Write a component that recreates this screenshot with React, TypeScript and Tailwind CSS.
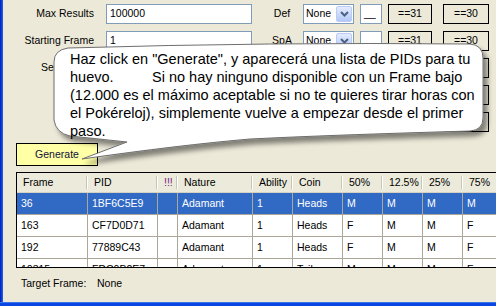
import React from "react";

const cols = [71, 70, 20, 75, 40, 50, 40, 40, 40, 60];
const headers = ["Frame", "PID", "!!!", "Nature", "Ability", "Coin", "50%", "12.5%", "25%", "75%"];
const rows = [
  ["36", "1BF6C5E9", "", "Adamant", "1", "Heads", "M", "M", "M", "M"],
  ["163", "CF7D0D71", "", "Adamant", "1", "Heads", "F", "M", "M", "F"],
  ["192", "77889C43", "", "Adamant", "1", "Heads", "F", "M", "M", "F"],
  ["10315", "FDC0B2E7", "", "Adamant", "1", "Tails", "M", "M", "M", "F"],
];

function TextBox({ w, value }: { w: string; value?: string }) {
  return (
    <div className={`${w} h-[20px] bg-white border border-[#7F9DB9] flex items-center pl-[3px] text-black`}>
      {value}
    </div>
  );
}

function Select() {
  return (
    <div className="w-[51px] h-[20px] bg-white border border-[#7F9DB9] flex items-center justify-between pl-[2px] pr-[1px]">
      <span>None</span>
      <div className="w-[16px] h-[16px] rounded-[2px] bg-gradient-to-b from-[#E3EBFE] to-[#B4C8F6] border border-[#BACCF5] flex items-center justify-center">
        <svg width="9" height="6" viewBox="0 0 9 6">
          <path d="M1 1 L4.5 4.5 L8 1" fill="none" stroke="#4D6185" strokeWidth="2" />
        </svg>
      </div>
    </div>
  );
}

function Btn({ w, label }: { w: string; label: string }) {
  return (
    <div className={`${w} h-[20px] border border-black bg-[#ECE9D8] flex items-center justify-center text-black`}>
      {label}
    </div>
  );
}

function FormRow({ label, value, right, rlabel }: { label: string; value?: string; right: boolean; rlabel: string }) {
  return (
    <div className="flex items-center h-[20px]">
      <div className="w-[91px] text-right whitespace-nowrap">{label}</div>
      <div className="ml-[12px]">
        <TextBox w="w-[146px]" value={value} />
      </div>
      <div className="ml-[10px] w-[40px] text-center">{rlabel}</div>
      <div className="ml-[1px]">
        <Select />
      </div>
      <div className="ml-[6px]">
        <TextBox w="w-[22px]" value={right ? "__" : ""} />
      </div>
      <div className="ml-[6px]">
        <Btn w="w-[44px]" label="==31" />
      </div>
      <div className="ml-[11px]">
        <Btn w="w-[46px]" label="==30" />
      </div>
    </div>
  );
}

export default function App() {
  return (
    <div
      className="w-[496px] h-[306px] flex flex-col bg-[#ECE9D8] overflow-hidden relative text-[10.5px] text-black"
      style={{ fontFamily: '"Liberation Sans", Arial, sans-serif' }}
    >
      <div className="flex flex-1 min-h-0">
        <div className="w-[3px] bg-gradient-to-r from-[#0019B0] via-[#0B3FD8] to-[#2A62EC]" />
        <div className="flex-1 flex flex-col min-w-0">
          <div className="pt-[4px] flex flex-col gap-[7px]">
            <FormRow label="Max Results" value="100000" right rlabel="Def" />
            <FormRow label="Starting Frame" value="1" right={false} rlabel="SpA" />
            <FormRow label="Seed (Hex)" value="" right={false} rlabel="SpD" />
            <FormRow label="" value="" right={false} rlabel="Spe" />
            <FormRow label="" value="" right={false} rlabel="HP" />
          </div>

          <div className="mt-[11px] ml-[13px] w-[82px] h-[23px] border border-black bg-[#FFFFA5] flex items-center justify-center text-[#10103a]">
            Generate
          </div>

          <div className="mt-[6px] ml-[13px] h-[96px] border-t border-l border-b border-black overflow-hidden bg-white">
            <div className="flex h-[20px] bg-[#EBEADB] border-b border-[#D6D2C2]">
              {headers.map((h, i) => (
                <div
                  key={i}
                  className="flex items-center justify-between shrink-0 pl-[6px]"
                  style={{ width: cols[i] }}
                >
                  <span className={i === 2 ? "text-[#7B1C86]" : ""}>{h}</span>
                  <span className="w-[2px] h-[13px] border-l border-[#C7C5B2] border-r border-r-white" />
                </div>
              ))}
            </div>
            {rows.map((r, ri) => (
              <div
                key={ri}
                className={`flex h-[22px] ${ri === 0 ? "bg-[#316AC5] text-white" : "bg-white text-black"}`}
              >
                {r.map((c, ci) => (
                  <div
                    key={ci}
                    className="shrink-0 h-[22px] border-r border-b border-[#ACA899] flex items-center pl-[4px]"
                    style={{ width: cols[ci] }}
                  >
                    {c}
                  </div>
                ))}
              </div>
            ))}
          </div>

          <div className="mt-[8px] ml-[18px] h-[16px] flex items-center">
            <div className="w-[76px]">Target Frame:</div>
            <div>None</div>
          </div>
        </div>
      </div>
      <div className="h-[4px] bg-[#0A46E0] border-t border-[#3B72EE]" />

      {/* speech bubble overlay */}
      <svg className="absolute left-0 top-0 pointer-events-none" width="496" height="306" viewBox="0 0 496 306">
        <defs>
          <filter id="sh" x="-10%" y="-20%" width="130%" height="150%">
            <feDropShadow dx="4" dy="5" stdDeviation="2.5" floodColor="#000" floodOpacity="0.45" />
          </filter>
        </defs>
        <path
          d="M 68 48 Q 270 42 470 44 Q 483 45 483 58 L 483 118 Q 483 130 470 131 Q 330 135 250 139 Q 180 145 82 159 L 127 142 Q 90 138 70 136 Q 56 133 54 120 L 54 62 Q 54 50 68 48 Z"
          fill="#FFFFFF"
          stroke="#6E6E6E"
          strokeWidth="1"
          filter="url(#sh)"
        />
      </svg>
      <div
        className="absolute left-[70px] top-[50px] text-[14.5px] leading-[18px] text-black whitespace-nowrap"
        style={{ fontFamily: '"Liberation Sans", Arial, sans-serif' }}
      >
        <div>Haz click en "Generate", y aparecerá una lista de PIDs para tu</div>
        <div>
          <span className="inline-block w-[82px]">huevo.</span>Si no hay ninguno disponible con un Frame bajo
        </div>
        <div>(12.000 es el máximo aceptable si no te quieres tirar horas con</div>
        <div>el Pokéreloj), simplemente vuelve a empezar desde el primer</div>
        <div>paso.</div>
      </div>
    </div>
  );
}
